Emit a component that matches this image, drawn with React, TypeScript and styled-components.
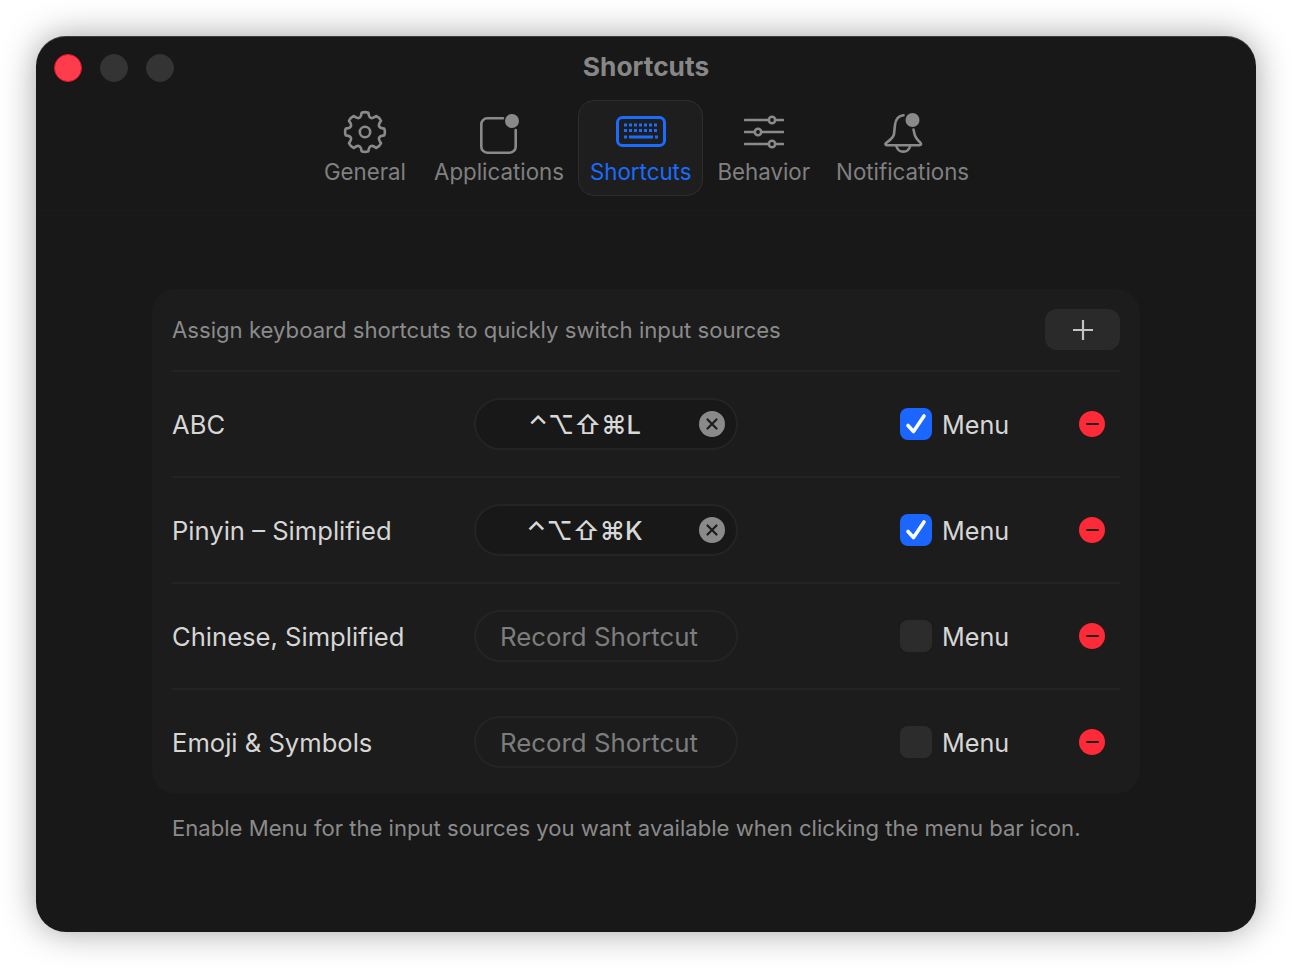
import React from "react";
import styled, { createGlobalStyle } from "styled-components";

const Global = createGlobalStyle`
  html, body { margin: 0; background: #fff; }
  body { font-family: Inter, "Noto Sans", "Liberation Sans", sans-serif; -webkit-font-smoothing: antialiased; }
`;

const Page = styled.div`
  width: 1292px;
  height: 968px;
  padding: 36px;
  box-sizing: border-box;
  overflow: hidden;
`;

const Win = styled.div`
  width: 1220px;
  height: 896px;
  background: #181818;
  border-radius: 30px;
  box-shadow: 0 0 34px rgba(0, 0, 0, 0.36), inset 0 1px 0 rgba(255, 255, 255, 0.16);
  display: flex;
  flex-direction: column;
`;

const TitleBar = styled.div`
  display: grid;
  grid-template-columns: 1fr auto 1fr;
  align-items: center;
  height: 64px;
  padding: 0 18px;
`;

const Lights = styled.div`
  display: flex;
  gap: 18px;
`;

const Light = styled.span<{ $on?: boolean }>`
  width: 28px;
  height: 28px;
  box-sizing: border-box;
  border-radius: 50%;
  background: ${(p) => (p.$on ? "#fe3c4c" : "#343434")};
  border: 1px solid ${(p) => (p.$on ? "#e0152b" : "#343434")};
`;

const Title = styled.div`
  font-size: 26.3px;
  font-weight: 700;
  color: #878787;
  line-height: 32px;
  margin-top: -2px;
`;

const Toolbar = styled.div`
  display: flex;
  justify-content: center;
  gap: 2px;
  height: 111px;
  box-sizing: border-box;
  border-bottom: 1px solid #1b1b1b;
`;

const Tab = styled.div<{ $active?: boolean }>`
  height: 96px;
  box-sizing: border-box;
  padding: 0 11px;
  display: flex;
  flex-direction: column;
  align-items: center;
  border-radius: 16px;
  border: 1.5px solid ${(p) => (p.$active ? "#2e2e2e" : "transparent")};
  background: ${(p) => (p.$active ? "#1e1e1e" : "transparent")};
  color: ${(p) => (p.$active ? "#1a6cff" : "#808080")};
  &:first-child {
    margin-left: 1px;
    margin-right: 2px;
  }
`;

const TabIcon = styled.div`
  height: 56.5px;
  box-sizing: border-box;
  padding-top: 5px;
  display: flex;
  align-items: center;
  justify-content: center;
  color: #8a8a8a;
  flex: none;
`;

const TabLabel = styled.div`
  font-size: 22.3px;
  font-weight: 400;
  line-height: 28px;
  white-space: nowrap;
`;

const Main = styled.div`
  padding: 78px 116px 0;
`;

const Card = styled.div`
  background: #1c1c1c;
  border-radius: 24px;
  padding: 0 20px;
`;

const Head = styled.div`
  display: flex;
  align-items: center;
  justify-content: space-between;
  height: 81px;
  border-bottom: 2px solid #232323;
`;

const HeadText = styled.div`
  font-size: 22.15px;
  color: #8b8b8b;
`;

const PlusButton = styled.div`
  width: 75px;
  height: 41px;
  border-radius: 12px;
  background: #2a2a2a;
  display: flex;
  align-items: center;
  justify-content: center;
  color: #c4c4c4;
`;

const Row = styled.div<{ $last?: boolean }>`
  display: grid;
  grid-template-columns: 302px 264px 162px 32px 147px 26px;
  align-items: center;
  height: 104px;
  border-bottom: ${(p) => (p.$last ? "none" : "2px solid #232323")};
`;

const Name = styled.div`
  font-size: 25.6px;
  color: #d6d6d6;
  white-space: nowrap;
`;

const Pill = styled.div<{ $empty?: boolean }>`
  height: 52px;
  box-sizing: border-box;
  border-radius: 26px;
  border: 2px solid #242424;
  background: ${(p) => (p.$empty ? "#1c1c1c" : "#181818")};
  display: flex;
  align-items: center;
  justify-content: space-between;
  padding: 0 11px 0 0;
`;

const Keys = styled.div`
  flex: 1;
  text-align: center;
  font-size: 25.6px;
  font-weight: 500;
  color: #d8d8d8;
  padding-right: 6px;
  white-space: nowrap;
`;

const Placeholder = styled.div`
  flex: 1;
  text-align: center;
  font-size: 25.8px;
  color: #7d7d7d;
  padding-right: 3px;
  white-space: nowrap;
`;

const Clear = styled.div`
  width: 26px;
  height: 26px;
  border-radius: 50%;
  background: #8a8a8a;
  display: flex;
  align-items: center;
  justify-content: center;
`;

const Check = styled.div<{ $on?: boolean }>`
  width: 32px;
  height: 32px;
  border-radius: 8px;
  background: ${(p) => (p.$on ? "#1a66ff" : "#2c2c2c")};
  display: flex;
  align-items: center;
  justify-content: center;
`;

const MenuLabel = styled.div`
  font-size: 25.2px;
  color: #d6d6d6;
  padding: 1px 0 0 10px;
`;

const Remove = styled.div`
  width: 26px;
  height: 26px;
  border-radius: 50%;
  background: #ff2a38;
  display: flex;
  align-items: center;
  justify-content: center;
`;

const Dash = styled.span`
  width: 13px;
  height: 2.5px;
  background: #1c1c1c;
  border-radius: 1px;
`;

const Note = styled.div`
  font-size: 22.1px;
  color: #8b8b8b;
  padding: 21px 20px 0;
  white-space: nowrap;
`;

const gearPath = (() => {
  const pt = (deg: number, r: number) => {
    const a = ((deg - 90) * Math.PI) / 180;
    return `${(22 + r * Math.cos(a)).toFixed(2)} ${(22 + r * Math.sin(a)).toFixed(2)}`;
  };
  let d = `M${pt(-10, 19.5)}`;
  for (let i = 0; i < 8; i++) {
    const t = i * 45;
    d += ` Q${pt(t, 20.6)} ${pt(t + 10, 19.5)} Q${pt(t + 22.5, 11.5)} ${pt(t + 35, 19.5)}`;
  }
  return d + "Z";
})();

const GearIcon = () => (
  <svg width="44" height="44" viewBox="0 0 44 44" fill="none" stroke="currentColor" strokeWidth="2.6" strokeLinejoin="round">
    <path d={gearPath} />
    <circle cx="22" cy="22" r="5.2" />
  </svg>
);

const AppsIcon = () => (
  <svg width="40" height="44" viewBox="0 0 40 44" fill="none">
    <path d="M24 8.3H8.3a6 6 0 0 0-6 6v22.4a6 6 0 0 0 6 6h22.4a6 6 0 0 0 6-6V20" stroke="currentColor" strokeWidth="2.6" strokeLinecap="round" />
    <circle cx="33" cy="11" r="7" fill="currentColor" />
  </svg>
);

const KeyboardIcon = () => (
  <svg width="50" height="32" viewBox="0 0 50 32" fill="none">
    <rect x="1.5" y="1.5" width="47" height="28" rx="5" stroke="#1a6cff" strokeWidth="3" />
    {[8, 13, 18, 23, 28, 33, 38].map((x) => <rect key={`a${x}`} x={x} y="7.5" width="3" height="3" fill="#1a6cff" />)}
    {[8, 13, 18, 23, 28, 33, 38].map((x) => <rect key={`b${x}`} x={x} y="13" width="3" height="3" fill="#1a6cff" />)}
    <rect x="8" y="19.5" width="3" height="3" fill="#1a6cff" />
    <rect x="13" y="19.5" width="24" height="3" fill="#1a6cff" />
    <rect x="39" y="19.5" width="3" height="3" fill="#1a6cff" />
  </svg>
);

const SlidersIcon = () => (
  <svg width="40" height="36" viewBox="0 0 40 36" fill="none" stroke="currentColor" strokeWidth="2.6" strokeLinecap="round">
    <path d="M1 6h23.7M31.3 6h7.7M1 18h9.7M17.3 18H39M1 30h23.7M31.3 30h7.7" />
    <circle cx="28" cy="6" r="3.2" />
    <circle cx="14" cy="18" r="3.2" />
    <circle cx="28" cy="30" r="3.2" />
  </svg>
);

const BellIcon = () => (
  <svg width="40" height="44" viewBox="0 0 40 44" fill="none" stroke="currentColor" strokeWidth="2.6" strokeLinecap="round">
    <path d="M20.5 5.3C15 5.8 12.5 10.5 12 15L11 24C10.5 28 7 30 3 33C1.8 34 2.5 35.3 4 35.3H36.5C38 35.3 38.6 34 37.7 33C34 29.5 32 27 31.5 24L30.5 19.5" />
    <path d="M13.5 36.5a7 7 0 0 0 13.5 0" />
    <circle cx="29.5" cy="10" r="7" fill="currentColor" stroke="none" />
  </svg>
);

const PlusIcon = () => (
  <svg width="22" height="22" viewBox="0 0 22 22" fill="none" stroke="currentColor" strokeWidth="2.2">
    <path d="M11 1v20M1 11h20" />
  </svg>
);

const XIcon = () => (
  <svg width="14" height="14" viewBox="0 0 14 14" fill="none" stroke="#1c1c1c" strokeWidth="2.2" strokeLinecap="round">
    <path d="M2.5 2.5l9 9M11.5 2.5l-9 9" />
  </svg>
);

const CheckIcon = () => (
  <svg width="24" height="24" viewBox="0 0 24 24" fill="none" stroke="#fff" strokeWidth="3.6" strokeLinecap="round" strokeLinejoin="round">
    <path d="M4 13.5l5.5 6L20 4" />
  </svg>
);

const tabs = [
  { label: "General", icon: <GearIcon /> },
  { label: "Applications", icon: <AppsIcon /> },
  { label: "Shortcuts", icon: <KeyboardIcon />, active: true },
  { label: "Behavior", icon: <SlidersIcon /> },
  { label: "Notifications", icon: <BellIcon /> },
];

const rows = [
  { name: "ABC", keys: "⌃⌥⇧⌘L", on: true },
  { name: "Pinyin – Simplified", keys: "⌃⌥⇧⌘K", on: true },
  { name: "Chinese, Simplified", on: false },
  { name: "Emoji & Symbols", on: false },
];

export default function App() {
  return (
    <Page>
      <Global />
      <Win>
        <TitleBar>
          <Lights>
            <Light $on />
            <Light />
            <Light />
          </Lights>
          <Title>Shortcuts</Title>
          <span />
        </TitleBar>
        <Toolbar>
          {tabs.map((t) => (
            <Tab key={t.label} $active={t.active}>
              <TabIcon>{t.icon}</TabIcon>
              <TabLabel>{t.label}</TabLabel>
            </Tab>
          ))}
        </Toolbar>
        <Main>
          <Card>
            <Head>
              <HeadText>Assign keyboard shortcuts to quickly switch input sources</HeadText>
              <PlusButton><PlusIcon /></PlusButton>
            </Head>
            {rows.map((r, i) => (
              <Row key={r.name} $last={i === rows.length - 1}>
                <Name>{r.name}</Name>
                {r.keys ? (
                  <Pill>
                    <Keys>{r.keys}</Keys>
                    <Clear><XIcon /></Clear>
                  </Pill>
                ) : (
                  <Pill $empty>
                    <Placeholder>Record Shortcut</Placeholder>
                  </Pill>
                )}
                <span />
                <Check $on={r.on}>{r.on && <CheckIcon />}</Check>
                <MenuLabel>Menu</MenuLabel>
                <Remove><Dash /></Remove>
              </Row>
            ))}
          </Card>
          <Note>Enable Menu for the input sources you want available when clicking the menu bar icon.</Note>
        </Main>
      </Win>
    </Page>
  );
}
